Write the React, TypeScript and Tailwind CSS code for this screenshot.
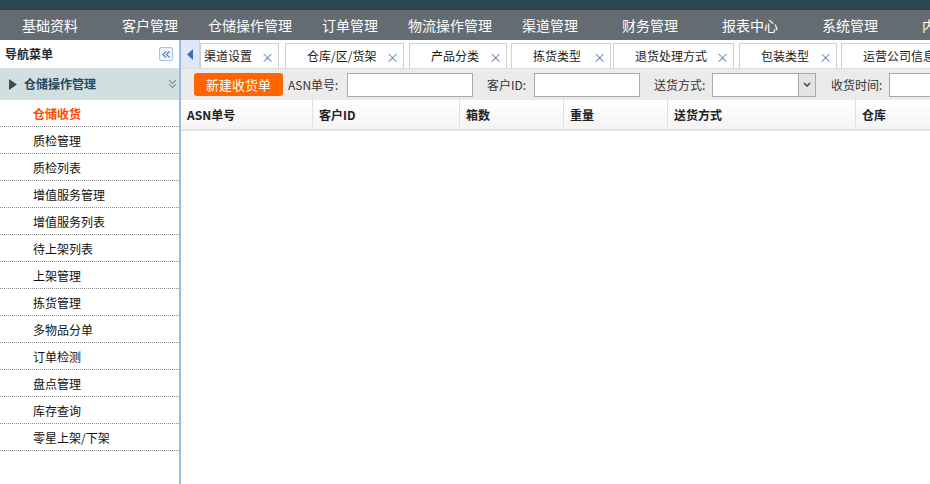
// Warehouse admin shell: top nav, left menu, tabbed workspace with a receiving list.

const FONT = "font-['Noto_Sans_CJK_SC','Liberation_Sans',sans-serif]";

const NAV = ["基础资料", "客户管理", "仓储操作管理", "订单管理", "物流操作管理", "渠道管理", "财务管理", "报表中心", "系统管理", "内部管理"];

const MENU = [
  "仓储收货", "质检管理", "质检列表", "增值服务管理", "增值服务列表", "待上架列表", "上架管理",
  "拣货管理", "多物品分单", "订单检测", "盘点管理", "库存查询", "零星上架/下架",
];

// widths + left gaps measured off the tab strip
const TABS: { name: string; w: string; pl: string; ml: string }[] = [
  { name: "渠道设置", w: "w-[79px]", pl: "pl-[3px]", ml: "ml-0" },
  { name: "仓库/区/货架", w: "w-[119px]", pl: "pl-[21px]", ml: "ml-[6px]" },
  { name: "产品分类", w: "w-[98px]", pl: "pl-[21px]", ml: "ml-[5px]" },
  { name: "拣货类型", w: "w-[100px]", pl: "pl-[21px]", ml: "ml-[4px]" },
  { name: "退货处理方式", w: "w-[121px]", pl: "pl-[21px]", ml: "ml-[2px]" },
  { name: "包装类型", w: "w-[98px]", pl: "pl-[21px]", ml: "ml-[5px]" },
  { name: "运营公司信息", w: "w-[121px]", pl: "pl-[21px]", ml: "ml-[4px]" },
];

const COLS: { name: string; w: string }[] = [
  { name: "ASN单号", w: "w-[132px]" },
  { name: "客户ID", w: "w-[147px]" },
  { name: "箱数", w: "w-[104px]" },
  { name: "重量", w: "w-[104px]" },
  { name: "送货方式", w: "w-[188px]" },
  { name: "仓库", w: "w-[120px]" },
];

function Sidebar() {
  return (
    <aside className="w-[181px] shrink-0 border-r-2 border-[#99bbe8] bg-white flex flex-col">
      <div className="h-[28px] flex items-center justify-between pl-[5px] pr-[6px]">
        <span className="text-[12px] font-bold text-[#1c2a33]">导航菜单</span>
        <button className="w-[14px] h-[14px] rounded-[2px] border border-[#a9c2e6] bg-[#eef4fc] flex items-center justify-center">
          <svg width="8" height="7" viewBox="0 0 8 7" fill="none" stroke="#5a7fb8" strokeWidth="1.2">
            <path d="M4 0.5 L1 3.5 L4 6.5 M7.5 0.5 L4.5 3.5 L7.5 6.5" />
          </svg>
        </button>
      </div>
      <div className="h-[32px] bg-[#d2dfe0] flex items-center pl-[9px] pr-[2px]">
        <svg width="8" height="11" viewBox="0 0 8 11" className="mr-[7px]">
          <path d="M0 0 L8 5.5 L0 11 Z" fill="#414a52" />
        </svg>
        <span className="text-[12px] font-bold text-[#24495a] flex-1">仓储操作管理</span>
        <svg width="9" height="10" viewBox="0 0 9 10" fill="none" stroke="#8a9499" strokeWidth="1.1">
          <path d="M1 1 L4.5 4.5 L8 1 M1 5 L4.5 8.5 L8 5" />
        </svg>
      </div>
      {MENU.map((m, i) => (
        <div
          key={m}
          className={`h-[27px] shrink-0 flex items-center pl-[33px] pt-[1px] text-[12px] border-b border-dotted border-[#8f8f8f] ${i === 0 ? "text-[#ff4a00] font-bold" : "text-[#111]"}`}
        >
          {m}
        </div>
      ))}
    </aside>
  );
}

function Toolbar() {
  const input = "h-[24px] bg-white border border-[#a9a9a9] shrink-0";
  const label = "text-[12px] text-[#333] shrink-0";
  return (
    <div className="h-[32px] bg-[#ebebeb] border-t border-[#dcdcdc] flex items-center pl-[13px] whitespace-nowrap">
      <button className="h-[23px] w-[89px] shrink-0 rounded-[3px] bg-[#ff6600] text-white text-[13px]">新建收货单</button>
      <span className={`${label} ml-[5px] w-[59px]`}>ASN单号:</span>
      <div className={`${input} w-[126px]`} />
      <span className={`${label} ml-[14px] w-[47px]`}>客户ID:</span>
      <div className={`${input} w-[106px]`} />
      <span className={`${label} ml-[14px] w-[58px]`}>送货方式:</span>
      <div className={`${input} w-[104px] flex justify-end`}>
        <div className="w-[17px] h-full bg-[#e3e3e3] border-l border-[#a9a9a9] flex items-center justify-center">
          <svg width="8" height="5" viewBox="0 0 8 5" fill="none" stroke="#444" strokeWidth="1.5">
            <path d="M1 1 L4 4 L7 1" />
          </svg>
        </div>
      </div>
      <span className={`${label} ml-[15px] w-[58px]`}>收货时间:</span>
      <div className={`${input} w-[60px]`} />
    </div>
  );
}

export default function App() {
  return (
    <div className={`w-[930px] h-[484px] overflow-hidden flex flex-col bg-white ${FONT}`}>
      <div className="h-[10px] bg-[#2a4651]" />
      <nav className="h-[30px] bg-[#646b71] flex whitespace-nowrap overflow-hidden">
        {NAV.map((n) => (
          <div key={n} className="w-[100px] shrink-0 text-center leading-[30px] text-[14px] text-white">
            {n}
          </div>
        ))}
      </nav>
      <div className="flex flex-1 min-h-0">
        <Sidebar />
        <main className="flex-1 min-w-0 flex flex-col overflow-hidden">
          <div className="h-[28px] flex items-end bg-white whitespace-nowrap overflow-hidden">
            <div className="w-[19px] h-full shrink-0 bg-[#dfe8f6] border-r border-[#c9d6ea] flex items-center justify-center">
              <svg width="6" height="11" viewBox="0 0 6 11">
                <path d="M6 0 L0 5.5 L6 11 Z" fill="#3f6cb5" />
              </svg>
            </div>
            <div className="flex items-end">
              {TABS.map((t) => (
                <div
                  key={t.name}
                  className={`${t.w} ${t.pl} ${t.ml} shrink-0 h-[25px] bg-white border border-b-0 border-[#d0d0d0] flex items-center text-[12px] text-[#1a1a1a]`}
                >
                  <span>{t.name}</span>
                  <span className="ml-auto mr-[4px] text-[#5b7fb3] text-[13px] leading-none">×</span>
                </div>
              ))}
            </div>
          </div>
          <Toolbar />
          <div className="h-[31px] flex bg-gradient-to-b from-white to-[#f4f4f4] border-b-2 border-[#e2e2e2] whitespace-nowrap">
            {COLS.map((c) => (
              <div
                key={c.name}
                className={`${c.w} shrink-0 border-r border-[#e0e0e0] flex items-center pl-[6px] text-[12px] font-bold text-[#222]`}
              >
                {c.name}
              </div>
            ))}
          </div>
          <div className="flex-1 bg-white" />
        </main>
      </div>
    </div>
  );
}
